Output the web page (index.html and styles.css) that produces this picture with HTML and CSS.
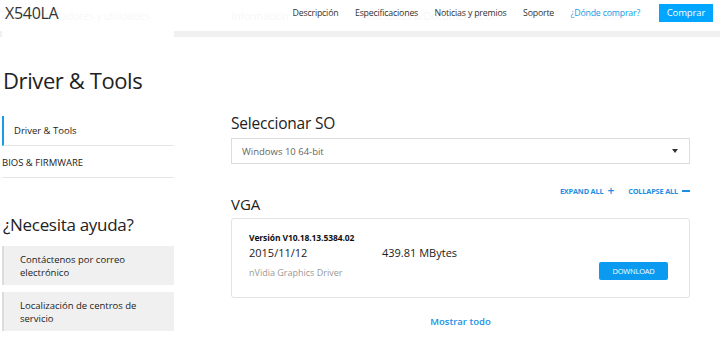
FILE: index.html
```html
<!DOCTYPE html>
<html lang="es">
<head>
<meta charset="utf-8">
<title>X540LA - Driver & Tools</title>
<link rel="stylesheet" href="styles.css">
</head>
<body>
<div class="top">
  <nav class="tabs">
    <div class="tab tab-active">Controladores y utilidades</div>
    <div class="tab">Información</div>
    <div class="tab">Manuales &amp; Documentación</div>
    <div class="tab">Garantía</div>
  </nav>
  <header class="header">
    <div class="model">X540LA</div>
    <ul class="nav">
      <li>Descripción</li>
      <li>Especificaciones</li>
      <li>Noticias y premios</li>
      <li class="nav-current">Soporte</li>
      <li class="nav-link">¿Dónde comprar?</li>
    </ul>
    <a class="buy">Comprar</a>
  </header>
</div>

<h1 class="title">Driver &amp; Tools</h1>

<div class="main">
  <aside class="sidebar">
    <ul class="menu">
      <li class="menu-item menu-active">Driver &amp; Tools</li>
      <li class="menu-item menu-plain">BIOS &amp; FIRMWARE</li>
    </ul>
    <h2 class="help-title">¿Necesita ayuda?</h2>
    <div class="help-box">Contáctenos por correo electrónico</div>
    <div class="help-box">Localización de centros de servicio</div>
  </aside>

  <section class="content">
    <h2 class="section-title">Seleccionar SO</h2>
    <div class="select">
      <span>Windows 10 64-bit</span>
      <span class="caret"></span>
    </div>
    <div class="toggles">
      <span class="toggle">EXPAND ALL<span class="plus">+</span></span>
      <span class="toggle">COLLAPSE ALL<span class="minus"></span></span>
    </div>
    <h2 class="group-title">VGA</h2>
    <div class="card">
      <div class="card-info">
        <div class="version">Versión V10.18.13.5384.02</div>
        <div class="meta">
          <span class="date">2015/11/12</span>
          <span class="size">439.81 MBytes</span>
        </div>
        <div class="desc">nVidia Graphics Driver</div>
      </div>
      <a class="download">DOWNLOAD</a>
    </div>
    <div class="more"><a>Mostrar todo</a></div>
  </section>
</div>
</body>
</html>
```

FILE: styles.css
```css
* { box-sizing: border-box; }
html, body { margin: 0; padding: 0; background: #fff; }
body {
  font-family: "Open Sans", "Noto Sans", sans-serif;
  color: #222;
  width: 720px;
  overflow: hidden;
}
ul { list-style: none; margin: 0; padding: 0; }
h1, h2 { margin: 0; font-weight: 400; }

.top { position: relative; height: 37px; }
.tabs {
  display: flex;
  height: 37px;
  background: #f0f0f0;
  padding-left: 2px;
}
.tab {
  width: 172px;
  text-align: center;
  font-size: 10.5px;
  color: #666;
  padding-top: 9px;
  letter-spacing: -0.2px;
}
.tab-active { background: #fff; }

.header {
  position: absolute;
  left: 0; top: 0; right: 0;
  height: 31px;
  background: rgba(255,255,255,0.94);
  display: flex;
  align-items: center;
  padding: 0 7px 5px 5px;
}
.model {
  font-size: 16px;
  color: #333;
  letter-spacing: -0.3px;
  flex: 1;
}
.nav {
  display: flex;
  gap: 16.5px;
  font-size: 8.8px;
  color: #333;
  letter-spacing: -0.2px;
  margin-right: 19px;
}
.nav-link { color: #1a9be6; }
.buy {
  background: #00a6ff;
  color: #fff;
  font-size: 9.5px;
  width: 54px;
  height: 18px;
  line-height: 18px;
  text-align: center;
  letter-spacing: -0.1px;
}

.title {
  font-size: 22px;
  color: #222;
  margin: 28px 0 0 3px;
  letter-spacing: -0.4px;
  line-height: 30px;
}

.main { display: flex; padding-left: 2px; margin-top: 18px; }
.sidebar { width: 172px; padding-top: 3px; }
.menu-item {
  font-size: 9.5px;
  border-bottom: 1px solid #e6e6e6;
  height: 31px;
  display: flex;
  align-items: center;
}
.menu-active {
  border-left: 2px solid #1a9be6;
  padding-left: 10px;
  height: 30px;
}
.menu-plain { padding-left: 0; margin-top: 1px; }

.help-title { font-size: 17px; margin: 35px 0 0 1px; line-height: 24px; letter-spacing: -0.3px; }
.help-box {
  background: #f0f0f0;
  border-left: 2px solid #dcdcdc;
  font-size: 9.5px;
  line-height: 13px;
  padding: 7px 20px 7px 16px;
  height: 39px;
  margin-top: 9px;
}
.help-box + .help-box { margin-top: 7px; }

.content { width: 459px; margin-left: 57px; }
.section-title { font-size: 15.5px; line-height: 20px; letter-spacing: -0.2px; }
.select {
  margin-top: 5px;
  height: 26px;
  border: 1px solid #dcdcdc;
  display: flex;
  align-items: center;
  justify-content: space-between;
  padding: 0 11px 0 10px;
  font-size: 9.5px;
  color: #666;
}
.caret {
  width: 0; height: 0;
  border-left: 3px solid transparent;
  border-right: 3px solid transparent;
  border-top: 4px solid #333;
}
.toggles {
  display: flex;
  justify-content: flex-end;
  gap: 14px;
  margin-top: 20px;
  height: 14px;
  align-items: center;
}
.toggle {
  display: flex;
  align-items: center;
  font-size: 7.3px;
  font-weight: 700;
  color: #1a8fe3;
  letter-spacing: -0.15px;
}
.plus { font-size: 12px; font-weight: 600; margin-left: 4px; line-height: 10px; }
.minus {
  display: inline-block;
  width: 8px;
  height: 1.5px;
  background: #1a8fe3;
  margin-left: 4px;
}

.group-title { font-size: 15px; line-height: 18px; margin-top: -3px; }
.card {
  margin-top: 5px;
  border: 1px solid #e3e3e3;
  border-radius: 3px;
  height: 80px;
  display: flex;
  align-items: flex-start;
  justify-content: space-between;
  padding: 13px 21px 0 17px;
}
.version { font-size: 8.5px; font-weight: 700; color: #111; letter-spacing: -0.1px; }
.meta { display: flex; font-size: 11px; color: #222; margin-top: 2px; }
.date { width: 133px; }
.desc { font-size: 9px; color: #999; margin-top: 6px; }
.download {
  margin-top: 30px;
  width: 69px;
  height: 18px;
  line-height: 18px;
  text-align: center;
  background: #0a9af0;
  border-radius: 2px;
  color: #fff;
  font-size: 7.5px;
  letter-spacing: -0.2px;
}
.more { text-align: center; margin-top: 10px; }
.more a { color: #1a8fe3; font-size: 9.5px; font-weight: 600; }
```
